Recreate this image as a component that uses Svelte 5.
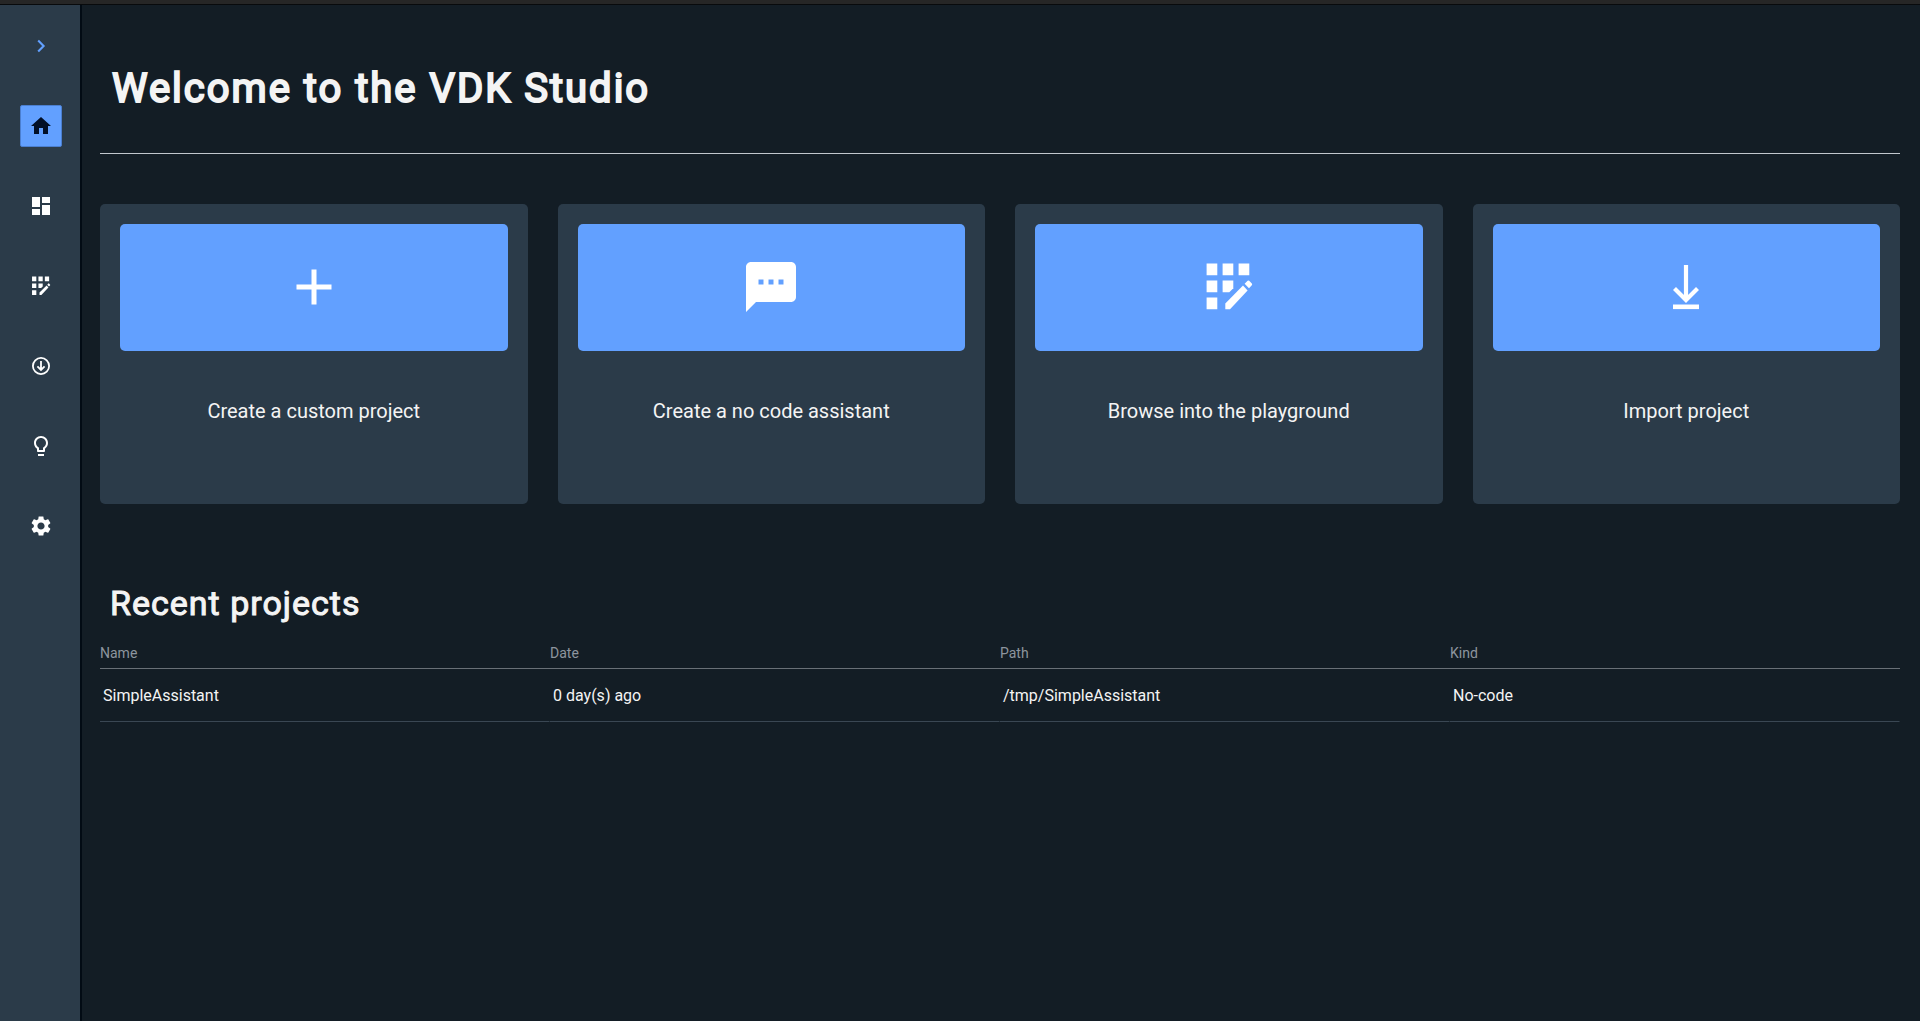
<script lang="ts">
  interface NavItem {
    id: string;
    label: string;
  }

  interface Action {
    icon: string;
    label: string;
  }

  interface Project {
    name: string;
    date: string;
    path: string;
    kind: string;
  }

  const navItems: NavItem[] = [
    { id: "home", label: "Home" },
    { id: "dashboard", label: "Dashboard" },
    { id: "playground", label: "Playground" },
    { id: "download", label: "Downloads" },
    { id: "tips", label: "Tips" },
    { id: "settings", label: "Settings" }
  ];

  const actions: Action[] = [
    { icon: "add", label: "Create a custom project" },
    { icon: "chat", label: "Create a no code assistant" },
    { icon: "playground", label: "Browse into the playground" },
    { icon: "import", label: "Import project" }
  ];

  const projects: Project[] = [
    {
      name: "SimpleAssistant",
      date: "0 day(s) ago",
      path: "/tmp/SimpleAssistant",
      kind: "No-code"
    }
  ];

  let current = $state("home");
</script>

{#snippet icon(name: string)}
  {#if name === "playground"}
    <svg viewBox="0 0 60 60" aria-hidden="true">
      <path d="M7.6 6.5h10.7v11.7H7.6zM23.6 6.5h10.7v11.7H23.6zM39.6 6.5h10.7v11.7H39.6zM7.6 23.5h10.7v11.7H7.6zM7.6 40.5h10.7v11.7H7.6z" />
      <path d="M23.6 23.5h10.7v7.7l-4 4h-6.7z" />
      <path d="M26.3 46.5v5.7H31l17.6-18.7-4.6-5z" />
      <path d="M45.6 26.8l3-3q.8-.8 1.6 0l2.6 2.8q.8.8 0 1.6l-2.8 3z" />
    </svg>
  {:else if name === "import"}
    <svg viewBox="0 0 60 60" aria-hidden="true">
      <path d="M30 8v34M18.5 31.5L30 43 41.5 31.5" class="line" stroke-width="4.2" />
      <path d="M17 47.5h26v4.6H17z" />
    </svg>
  {:else}
    <svg viewBox="0 0 24 24" aria-hidden="true">
      {#if name === "chevron"}
        <path d="M9.2 6.6l5.4 5.4-5.4 5.4" class="line" stroke-width="2.1" />
      {:else if name === "home"}
        <path d="M10 20v-6h4v6h5v-8h3L12 3 2 12h3v8z" />
      {:else if name === "dashboard"}
        <path d="M3 13h8V3H3v10zm0 8h8v-6H3v6zm10 0h8V11h-8v10zm0-18v6h8V3h-8z" />
      {:else if name === "download"}
        <circle cx="12" cy="12" r="8.1" class="line" stroke-width="1.8" />
        <path d="M12 7v9M8.4 12.4L12 16l3.6-3.6" class="line" stroke-width="1.8" />
      {:else if name === "tips"}
        <path d="M9 20h6v2H9zM12 2C8.1 2 5 5.1 5 9c0 2.4 1.2 4.5 3 5.7V17c0 .5.4 1 1 1h6c.6 0 1-.5 1-1v-2.3c1.8-1.3 3-3.4 3-5.7 0-3.9-3.1-7-7-7zm2.9 11.1l-.9.6V16h-4v-2.3l-.9-.6C7.8 12.2 7 10.6 7 9c0-2.8 2.2-5 5-5s5 2.2 5 5c0 1.6-.8 3.2-2.1 4.1z" />
      {:else if name === "settings"}
        <path d="M19.14 12.94c.04-.3.06-.61.06-.94 0-.32-.02-.64-.07-.94l2.03-1.58c.18-.14.23-.41.12-.61l-1.92-3.32c-.12-.22-.37-.29-.59-.22l-2.39.96c-.5-.38-1.03-.7-1.62-.94l-.36-2.54c-.04-.24-.24-.41-.48-.41h-3.84c-.24 0-.43.17-.47.41l-.36 2.54c-.59.24-1.13.57-1.62.94l-2.39-.96c-.22-.08-.47 0-.59.22L2.74 8.87c-.12.21-.08.47.12.61l2.03 1.58c-.05.3-.09.63-.09.94s.02.64.07.94l-2.03 1.58c-.18.14-.23.41-.12.61l1.92 3.32c.12.22.37.29.59.22l2.39-.96c.5.38 1.03.7 1.62.94l.36 2.54c.05.24.24.41.48.41h3.84c.24 0 .44-.17.47-.41l.36-2.54c.59-.24 1.13-.56 1.62-.94l2.39.96c.22.08.47 0 .59-.22l1.92-3.32c.12-.22.07-.47-.12-.61l-2.01-1.58zM12 15.6c-1.98 0-3.6-1.62-3.6-3.6s1.62-3.6 3.6-3.6 3.6 1.62 3.6 3.6-1.62 3.6-3.6 3.6z" />
      {:else if name === "add"}
        <path d="M19 13h-6v6h-2v-6H5v-2h6V5h2v6h6z" />
      {:else if name === "chat"}
        <path d="M20 2H4c-1.1 0-2 .9-2 2v18l4-4h14c1.1 0 2-.9 2-2V4c0-1.1-.9-2-2-2zM9 11H7V9h2v2zm4 0h-2V9h2v2zm4 0h-2V9h2v2z" />
      {/if}
    </svg>
  {/if}
{/snippet}

<div class="app">
  <div class="title-bar"></div>

  <div class="body">
    <nav class="sidebar">
      <button class="nav-button expand" aria-label="Expand menu">
        {@render icon("chevron")}
      </button>
      {#each navItems as item}
        <button
          class="nav-button"
          class:active={current === item.id}
          aria-label={item.label}
          onclick={() => (current = item.id)}
        >
          {@render icon(item.id)}
        </button>
      {/each}
    </nav>

    <main>
      <header>
        <h1>Welcome to the VDK Studio</h1>
      </header>

      <section class="actions">
        {#each actions as action}
          <button class="card">
            <span class="tile">{@render icon(action.icon)}</span>
            <span class="card-label">{action.label}</span>
          </button>
        {/each}
      </section>

      <section class="recent">
        <h2>Recent projects</h2>
        <table>
          <thead>
            <tr>
              <th>Name</th>
              <th>Date</th>
              <th>Path</th>
              <th>Kind</th>
            </tr>
          </thead>
          <tbody>
            {#each projects as project}
              <tr>
                <td>{project.name}</td>
                <td>{project.date}</td>
                <td>{project.path}</td>
                <td>{project.kind}</td>
              </tr>
            {/each}
          </tbody>
        </table>
      </section>
    </main>
  </div>
</div>

<style>
  :global(body) {
    background: #131d25;
  }

  .app {
    display: flex;
    flex-direction: column;
    min-height: 100vh;
    font-family: Roboto, sans-serif;
    color: #f4f4f4;
  }

  .title-bar {
    box-sizing: border-box;
    height: 5px;
    background: #262626;
    border-bottom: 1px solid #080a0c;
  }

  .body {
    display: flex;
    flex: 1;
  }

  .sidebar {
    box-sizing: border-box;
    display: flex;
    flex-direction: column;
    gap: 38px;
    width: 82px;
    flex-shrink: 0;
    padding: 20px;
    background: #2b3b49;
    box-shadow: inset -2px 0 #020b14;
  }

  .nav-button {
    box-sizing: border-box;
    display: flex;
    align-items: center;
    justify-content: center;
    width: 42px;
    height: 42px;
    padding: 0;
    border: 1px solid transparent;
    border-radius: 2px;
    background: none;
    color: #ffffff;
    cursor: pointer;
  }

  .nav-button svg {
    width: 24px;
    height: 24px;
  }

  .nav-button.expand {
    color: #62a0ff;
  }

  .nav-button.active {
    background: #62a0ff;
    border-color: #4b7fd0;
    color: #021027;
  }

  svg {
    display: block;
    fill: currentColor;
  }

  .line {
    fill: none;
    stroke: currentColor;
  }

  main {
    flex: 1;
    min-width: 0;
    padding: 0 20px 20px 18px;
  }

  header {
    padding: 62px 12px 42px;
    border-bottom: 1px solid #c1c7cd;
  }

  h1 {
    margin: 0;
    font-size: 40px;
    line-height: 44px;
    font-weight: 400;
    letter-spacing: 2px;
    -webkit-text-stroke: 2px currentColor;
  }

  .actions {
    display: grid;
    grid-template-columns: repeat(4, 1fr);
    gap: 30px;
    margin-top: 50px;
  }

  .card {
    display: flex;
    flex-direction: column;
    height: 300px;
    padding: 20px;
    border: none;
    border-radius: 5px;
    background: #2b3b49;
    color: inherit;
    font-family: inherit;
    cursor: pointer;
  }

  .tile {
    box-sizing: border-box;
    display: flex;
    align-items: center;
    justify-content: center;
    align-self: stretch;
    height: 127px;
    padding-bottom: 1px;
    border-radius: 5px;
    background: #62a0ff;
    color: #ffffff;
  }

  .tile svg {
    width: 60px;
    height: 60px;
  }

  .card-label {
    align-self: stretch;
    margin-top: 48px;
    font-size: 20px;
    line-height: 24px;
    text-align: center;
  }

  .recent {
    margin-top: 79px;
  }

  h2 {
    margin: 0 10px;
    font-size: 34px;
    line-height: 40px;
    font-weight: 400;
    letter-spacing: 1px;
    -webkit-text-stroke: 1px currentColor;
  }

  table {
    width: 100%;
    margin-top: 21px;
    table-layout: fixed;
    border-collapse: separate;
    border-spacing: 0;
  }

  th {
    padding: 0 0 6px;
    border-bottom: 1px solid #697077;
    color: #8d959e;
    font-size: 14px;
    line-height: 18px;
    font-weight: 400;
    text-align: left;
  }

  td {
    padding: 17px 3px 15px;
    border-right: 1px solid #131d25;
    border-bottom: 1px solid #3a4753;
    font-size: 16px;
    line-height: 20px;
  }
</style>
